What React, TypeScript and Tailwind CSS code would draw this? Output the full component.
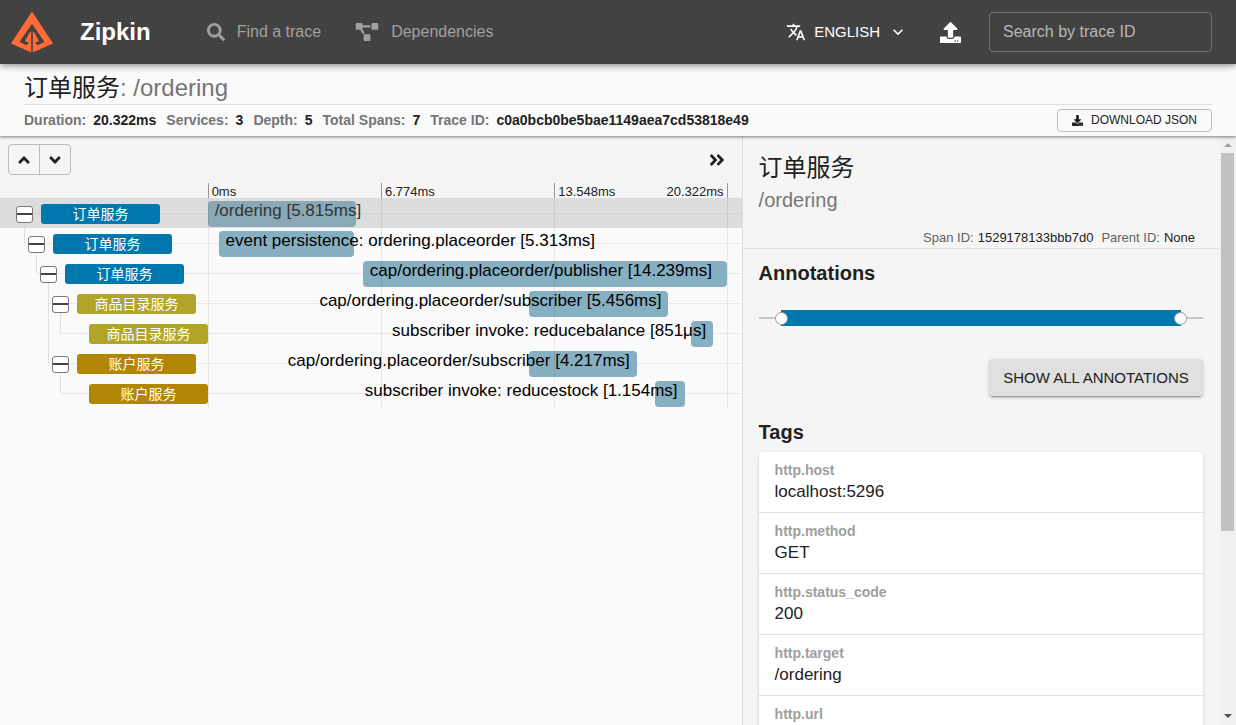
import React, { useState } from "react";
import {
  FaAngleDoubleRight,
  FaAngleDown,
  FaAngleUp,
  FaDownload,
  FaProjectDiagram,
  FaSearch,
  FaUpload
} from "react-icons/fa";
import { MdExpandMore, MdTranslate } from "react-icons/md";

interface Span {
  id: number;
  service: string;
  color: string;
  depth: number;
  hasChildren: boolean;
  label: string;
  left: number;
  width: number;
  alignEnd?: boolean;
  // Tree levels whose connector runs the whole row height
  through?: number[];
}

interface Tag {
  name: string;
  value?: string;
}

const BLUE = "bg-[#0077ad]";
const OLIVE = "bg-[#b1a528]";
const GOLD = "bg-[#b28605]";

const spans: Span[] = [
  { id: 1, service: "订单服务", color: BLUE, depth: 0, hasChildren: true, label: "/ordering [5.815ms]", left: 0, width: 28.6 },
  { id: 2, service: "订单服务", color: BLUE, depth: 1, hasChildren: true, label: "event persistence: ordering.placeorder [5.313ms]", left: 2.1, width: 26.1 },
  { id: 3, service: "订单服务", color: BLUE, depth: 2, hasChildren: true, label: "cap/ordering.placeorder/publisher [14.239ms]", left: 29.9, width: 70.1 },
  { id: 4, service: "商品目录服务", color: OLIVE, depth: 3, hasChildren: true, label: "cap/ordering.placeorder/subscriber [5.456ms]", left: 61.9, width: 26.9, alignEnd: true, through: [2] },
  { id: 5, service: "商品目录服务", color: OLIVE, depth: 4, hasChildren: false, label: "subscriber invoke: reducebalance [851μs]", left: 93.2, width: 4.2, alignEnd: true, through: [2] },
  { id: 6, service: "账户服务", color: GOLD, depth: 3, hasChildren: true, label: "cap/ordering.placeorder/subscriber [4.217ms]", left: 61.9, width: 20.8, alignEnd: true },
  { id: 7, service: "账户服务", color: GOLD, depth: 4, hasChildren: false, label: "subscriber invoke: reducestock [1.154ms]", left: 86.2, width: 5.7, alignEnd: true }
];

const stats = [
  { name: "Duration", value: "20.322ms" },
  { name: "Services", value: "3" },
  { name: "Depth", value: "5" },
  { name: "Total Spans", value: "7" },
  { name: "Trace ID", value: "c0a0bcb0be5bae1149aea7cd53818e49" }
];

const tags: Tag[] = [
  { name: "http.host", value: "localhost:5296" },
  { name: "http.method", value: "GET" },
  { name: "http.status_code", value: "200" },
  { name: "http.target", value: "/ordering" },
  { name: "http.url" }
];

const INDENT = 12;

const ZipkinLogo: React.FC = () => (
  <svg viewBox="0 0 42 42" className="w-[42px] h-[42px] shrink-0" aria-hidden="true">
    <path fill="#ff6c37" d="M21 0.500 L42 32.500 L21 41.800 L0 32.500 Z" />
    <path
      fill="#424242"
      d="M20.200 14 L8.500 31 L15.500 34.200 L18 32 L14 30 L18 22.500 L20.200 20 V42 H21.800 V20 L24 22.500 L28 30 L24 32 L26.500 34.200 L33.500 31 L21.800 14 L21 13 Z"
    />
  </svg>
);

const Header: React.FC = () => {
  const [traceId, setTraceId] = useState("");

  return (
    <header className="relative z-20 flex items-center h-16 shrink-0 bg-[#424242] pl-[11px] pr-6 shadow-[0_2px_4px_-1px_rgba(0,0,0,0.2),0_4px_5px_rgba(0,0,0,0.14),0_1px_10px_rgba(0,0,0,0.12)]">
      <ZipkinLogo />
      <h1 className="ml-[27px] text-2xl font-bold text-white">Zipkin</h1>
      <nav className="flex items-center gap-[34px] ml-14 text-base text-[#a0a0a0]">
        <a href="#find" className="flex items-center gap-3">
          <FaSearch className="w-[18px] h-[18px]" />
          <span>Find a trace</span>
        </a>
        <a href="#dependencies" className="flex items-center gap-3">
          <FaProjectDiagram className="w-6 h-[18px]" />
          <span>Dependencies</span>
        </a>
      </nav>
      <div className="flex items-center ml-auto text-white">
        <button type="button" className="flex items-center text-[15px] font-medium">
          <MdTranslate className="w-5 h-5 mr-2" />
          <span>ENGLISH</span>
          <MdExpandMore className="w-5 h-5 ml-2" />
        </button>
        <button type="button" aria-label="Upload JSON" className="ml-8">
          <FaUpload className="w-[21px] h-[21px]" />
        </button>
        <input
          type="text"
          aria-label="Search by trace ID"
          placeholder="Search by trace ID"
          value={traceId}
          onChange={(e) => setTraceId(e.target.value)}
          className="ml-7 w-[223px] h-10 px-[13px] rounded border border-[#6e6e6e] bg-transparent text-base text-white placeholder:text-[#b8b8b8] focus:outline-none"
        />
      </div>
    </header>
  );
};

const TraceSummary: React.FC = () => (
  <section className="relative z-10 shrink-0 bg-[#fafafa] px-6 pt-2 h-[72px] shadow-[0_1px_3px_rgba(0,0,0,0.5)]">
    <h2 className="h-[33px] border-b border-[#dedede] text-2xl leading-8 text-[#212121]">
      订单服务<span className="text-[#757575]">: /ordering</span>
    </h2>
    <div className="flex items-center justify-between h-[30px]">
      <dl className="flex gap-2.5 text-sm font-bold">
        {stats.map((stat) => (
          <div key={stat.name} className="flex gap-[7px]">
            <dt className="text-[#757575]">{stat.name}:</dt>
            <dd className="text-[#212121]">{stat.value}</dd>
          </div>
        ))}
      </dl>
      <button
        type="button"
        className="flex items-center gap-2 h-[23px] px-3.5 rounded border border-[#bdbdbd] text-xs text-[#212121]"
      >
        <FaDownload className="w-[11px] h-[11px]" />
        <span>DOWNLOAD JSON</span>
      </button>
    </div>
  </section>
);

interface SpanRowProps {
  span: Span;
  selected: boolean;
  onSelect: () => void;
}

const SpanRow: React.FC<SpanRowProps> = ({ span, selected, onSelect }) => {
  const guideX = 24 + span.depth * INDENT;

  return (
    <div onClick={onSelect} className={`relative flex h-[30px] cursor-pointer ${selected ? "bg-[#dddddd]" : ""}`}>
      {/* Tree connectors */}
      <span
        className={`absolute top-[15px] right-0 h-px ${selected ? "bg-[#d2d2d2]" : "bg-[#e8e8e8]"}`}
        style={{ left: span.depth === 0 ? guideX : guideX - INDENT }}
      />
      {span.depth > 0 && (
        <span className="absolute top-0 h-[15px] w-px bg-[#e0e0e0]" style={{ left: guideX - INDENT }} />
      )}
      {span.through?.map((level) => (
        <span key={level} className="absolute inset-y-0 w-px bg-[#e0e0e0]" style={{ left: 24 + level * INDENT }} />
      ))}
      {span.hasChildren && !selected && (
        <span className="absolute top-[15px] bottom-0 w-px bg-[#e0e0e0]" style={{ left: guideX }} />
      )}

      <div className="relative flex items-center gap-2 w-[28%] shrink-0 pt-0.5" style={{ paddingLeft: 16 + span.depth * INDENT }}>
        {span.hasChildren ? (
          <button
            type="button"
            aria-label="Collapse span"
            className="flex items-center justify-center w-[17px] h-[17px] shrink-0 rounded-[3px] border border-[#777777] bg-white"
          >
            <span className="w-full h-0.5 bg-[#444444]" />
          </button>
        ) : (
          <span className="w-[17px] shrink-0" />
        )}
        <span className={`w-[119px] h-5 shrink-0 rounded-[3px] text-center text-sm leading-5 text-white ${span.color}`}>
          {span.service}
        </span>
      </div>

      <div className="relative flex-1 mr-[15px]">
        <span
          className={`absolute top-[3px] h-[26px] rounded ${selected ? "bg-[#8ba9b4]" : "bg-[#87afc2]"}`}
          style={{ left: `${span.left}%`, width: `${span.width}%` }}
        />
        <span
          className={`absolute top-0 px-[7px] text-[17px] leading-[26px] whitespace-nowrap ${selected ? "text-[#2f3538]" : "text-black"}`}
          style={span.alignEnd ? { right: `${100 - span.left - span.width}%` } : { left: `${span.left}%` }}
        >
          {span.label}
        </span>
      </div>
    </div>
  );
};

const Timeline: React.FC = () => {
  const [selectedId, setSelectedId] = useState(1);

  return (
    <section className="w-[60%] shrink-0 bg-[#fafafa]">
      <div className="bg-[#f5f5f5]">
        <div className="flex items-center justify-between h-[47px] px-2 text-[#212121]">
          <div className="flex rounded border border-[#bdbdbd]">
            <button type="button" aria-label="Collapse all" className="flex items-center justify-center w-[30px] h-[29px]">
              <FaAngleUp className="w-[18px] h-[18px]" />
            </button>
            <button type="button" aria-label="Expand all" className="flex items-center justify-center w-[31px] h-[29px] border-l border-[#bdbdbd]">
              <FaAngleDown className="w-[18px] h-[18px]" />
            </button>
          </div>
          <button type="button" aria-label="Toggle detail panel" className="mr-2">
            <FaAngleDoubleRight className="w-[18px] h-[18px]" />
          </button>
        </div>
        <div className="grid grid-cols-3 h-[15px] ml-[28%] mr-[14px] text-[13px] leading-[17px] text-[#212121]">
          <span className="pl-[3px] border-l border-[#999999]">0ms</span>
          <span className="pl-[3px] border-l border-[#999999]">6.774ms</span>
          <span className="flex justify-between px-[3px] border-x border-[#999999]">
            <span>13.548ms</span>
            <span>20.322ms</span>
          </span>
        </div>
      </div>
      <div className="relative">
        {spans.map((span) => (
          <SpanRow
            key={span.id}
            span={span}
            selected={span.id === selectedId}
            onSelect={() => setSelectedId(span.id)}
          />
        ))}
        {/* Tick lines continue through the rows */}
        <div className="absolute inset-y-0 left-[28%] right-[14px] grid grid-cols-3 pointer-events-none">
          <span className="border-l border-black/8" />
          <span className="border-l border-black/8" />
          <span className="border-x border-black/8" />
        </div>
      </div>
    </section>
  );
};

const Scrollbar: React.FC = () => (
  <div className="flex flex-col items-center w-[17px] shrink-0 bg-[#f1f1f1]" aria-hidden="true">
    <svg viewBox="0 0 17 17" className="w-[17px] h-[17px] shrink-0">
      <path d="M5 11 L9 7 L13 11 Z" fill="#a3a3a3" />
    </svg>
    <div className="w-[13px] h-[378px] bg-[#c1c1c1]" />
    <svg viewBox="0 0 17 17" className="w-[17px] h-[17px] shrink-0 mt-auto">
      <path d="M5 6 L9 10 L13 6 Z" fill="#505050" />
    </svg>
  </div>
);

const SpanDetail: React.FC = () => (
  <aside className="flex flex-1 min-w-0 border-l border-[#dddddd] bg-[#f5f5f5] text-[#212121]">
    <div className="flex-1 min-w-0 overflow-hidden">
      <div className="px-4 pt-4 h-[113px] border-b border-[#dedede]">
        <h2 className="text-2xl leading-8">订单服务</h2>
        <p className="text-xl leading-8 text-[#757575]">/ordering</p>
        <dl className="flex justify-end gap-2 mt-3 pr-2 text-[13px] leading-5">
          <div className="flex gap-1">
            <dt className="text-[#616161]">Span ID:</dt>
            <dd>1529178133bbb7d0</dd>
          </div>
          <div className="flex gap-1">
            <dt className="text-[#616161]">Parent ID:</dt>
            <dd>None</dd>
          </div>
        </dl>
      </div>

      <div className="px-4 pt-2.5">
        <h3 className="text-xl leading-7 font-bold">Annotations</h3>
        <div className="relative flex items-center h-4 mt-[23px] px-[22px]">
          <span className="absolute inset-x-0 top-[7px] h-0.5 bg-[#c8c8c8]" />
          <span className="relative flex items-center justify-between flex-1 h-4 bg-[#0077ad]">
            <button type="button" aria-label="Server Start" className="w-[13px] h-[13px] -ml-[6px] rounded-full border border-[#999999] bg-white" />
            <button type="button" aria-label="Server Finish" className="w-[13px] h-[13px] -mr-[6px] rounded-full border border-[#999999] bg-white" />
          </span>
        </div>
        <div className="flex justify-end mt-[33px]">
          <button
            type="button"
            className="h-[37px] w-[214px] rounded bg-[#e0e0e0] text-[15px] leading-5 shadow-[0_3px_1px_-2px_rgba(0,0,0,0.2),0_2px_2px_rgba(0,0,0,0.14),0_1px_5px_rgba(0,0,0,0.12)]"
          >
            SHOW ALL ANNOTATIONS
          </button>
        </div>

        <h3 className="mt-[22px] text-xl leading-7 font-bold">Tags</h3>
        <ul className="mt-1.5 rounded bg-white shadow-[0_1px_3px_rgba(0,0,0,0.2)]">
          {tags.map((tag) => (
            <li key={tag.name} className="h-[61px] px-4 pt-2 border-b border-[#e0e0e0]">
              <p className="text-sm leading-5 font-bold text-[#9e9e9e]">{tag.name}</p>
              {tag.value && <p className="text-[17px] leading-6">{tag.value}</p>}
            </li>
          ))}
        </ul>
      </div>
    </div>
    <Scrollbar />
  </aside>
);

export default function App() {
  return (
    <div className="flex flex-col h-screen overflow-hidden bg-[#fafafa] font-['Liberation_Sans','Noto_Sans_CJK_SC',sans-serif]">
      <Header />
      <TraceSummary />
      <main className="flex flex-1 min-h-0">
        <Timeline />
        <SpanDetail />
      </main>
    </div>
  );
}
